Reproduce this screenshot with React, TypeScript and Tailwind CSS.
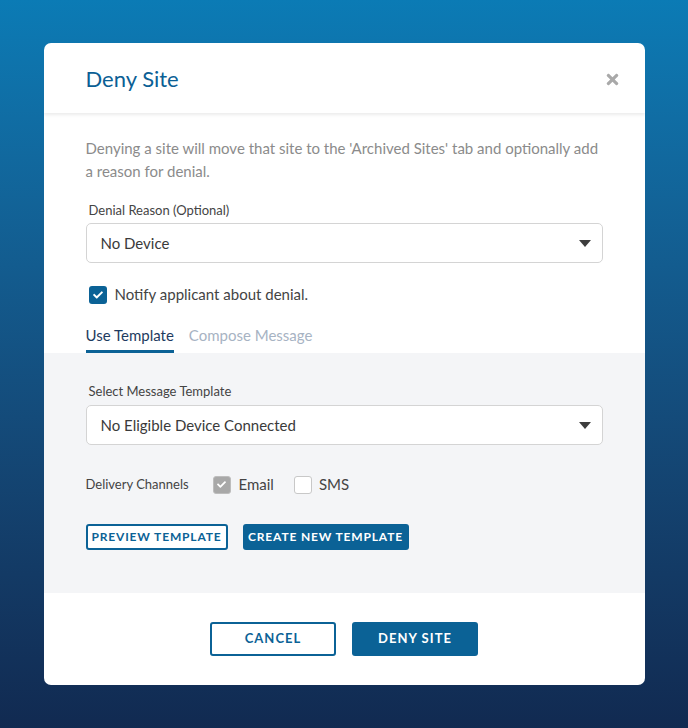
import React, { useState } from 'react';
import { FaTimes, FaCheck } from 'react-icons/fa';

const Caret = () => (
  <svg width="12" height="7" viewBox="0 0 12 7" className="text-[#3d3d3d]">
    <path d="M0 0h12L6 7z" fill="currentColor" />
  </svg>
);

const SelectBox: React.FC<{ value: string }> = ({ value }) => (
  <div className="flex items-center justify-between h-10 w-full rounded-[5px] border border-[#d4d4d4] bg-white pl-[14px] pr-[11px]">
    <span className="text-[15px] text-[#3a3a3a]">{value}</span>
    <Caret />
  </div>
);

export default function App() {
  const [tab, setTab] = useState('template');

  return (
    <div
      className="min-h-[728px] h-screen flex items-center justify-center bg-gradient-to-b from-[#0b7bb5] to-[#112a51]"
      style={{ fontFamily: 'Lato, "Noto Sans", sans-serif' }}
    >
      <div className="w-[601px] bg-white rounded-[7px] overflow-hidden">
        {/* Header */}
        <div className="h-[70px] flex items-center justify-between pl-[42px] pr-[24px] shadow-[0_2px_3px_rgba(0,0,0,0.08)] relative">
          <h1 className="text-[22px] text-[#0b5f95] pt-[1px]">Deny Site</h1>
          <FaTimes className="text-[#a9a9a9] w-[17px] h-[17px] mt-[2px]" />
        </div>

        {/* Body */}
        <div className="px-[42px] pt-[24px]">
          <p className="text-[15px] leading-[23px] text-[#8b8b8b]">
            Denying a site will move that site to the 'Archived Sites' tab and optionally add a reason for denial.
          </p>

          <label className="block mt-[18px] ml-[3px] text-[13px] text-[#444] leading-[18px]">Denial Reason (Optional)</label>
          <div className="mt-[4px]">
            <SelectBox value="No Device" />
          </div>

          <div className="flex items-center mt-[20px] ml-[3px]">
            <span className="w-[18px] h-[18px] rounded-[3px] bg-[#0b6296] flex items-center justify-center">
              <FaCheck className="text-white w-[10px] h-[10px]" />
            </span>
            <span className="ml-[8px] text-[15px] text-[#444]">Notify applicant about denial.</span>
          </div>

          <div className="flex items-end gap-[15px] mt-[18px]">
            <button
              onClick={() => setTab('template')}
              className={`pb-[4px] text-[15px] border-b-[3px] ${
                tab === 'template' ? 'text-[#1e3b60] border-[#0b6296]' : 'text-[#a7b3c3] border-transparent'
              }`}
            >
              Use Template
            </button>
            <button
              onClick={() => setTab('compose')}
              className={`pb-[4px] text-[15px] border-b-[3px] ${
                tab === 'compose' ? 'text-[#1e3b60] border-[#0b6296]' : 'text-[#a7b3c3] border-transparent'
              }`}
            >
              Compose Message
            </button>
          </div>
        </div>

        {/* Template section */}
        <div className="bg-[#f4f5f7] px-[42px] pt-[29px] pb-[43px]">
          <label className="block ml-[3px] text-[13px] text-[#444] leading-[18px]">Select Message Template</label>
          <div className="mt-[5px]">
            <SelectBox value="No Eligible Device Connected" />
          </div>

          <div className="flex items-center mt-[28px]">
            <span className="text-[13px] text-[#444] w-[127px]">Delivery Channels</span>
            <span className="w-[18px] h-[18px] rounded-[3px] bg-[#a8a8a8] border border-[#bdbdbd] flex items-center justify-center">
              <FaCheck className="text-white w-[9px] h-[9px]" />
            </span>
            <span className="ml-[8px] text-[15px] text-[#444]">Email</span>
            <span className="ml-[20px] w-[18px] h-[18px] rounded-[3px] bg-white border border-[#c8c8c8]" />
            <span className="ml-[7px] text-[15px] text-[#444]">SMS</span>
          </div>

          <div className="flex gap-[15px] mt-[28px]">
            <button className="h-[26px] w-[142px] whitespace-nowrap rounded-[3px] border-2 border-[#0b6296] bg-white text-[#0b6296] text-[12px] font-bold tracking-[0.07em]">
              PREVIEW TEMPLATE
            </button>
            <button className="h-[26px] w-[166px] whitespace-nowrap rounded-[3px] bg-[#0b6296] text-white text-[12px] font-bold tracking-[0.07em]">
              CREATE NEW TEMPLATE
            </button>
          </div>
        </div>

        {/* Footer */}
        <div className="flex justify-center gap-[16px] py-[29px]">
          <button className="w-[126px] h-[34px] rounded-[3px] border-2 border-[#0b6296] bg-white text-[#0b6296] text-[13px] font-bold tracking-[0.08em]">
            CANCEL
          </button>
          <button className="w-[126px] h-[34px] rounded-[3px] bg-[#0b6296] text-white text-[13px] font-bold tracking-[0.08em]">
            DENY SITE
          </button>
        </div>
      </div>
    </div>
  );
}
